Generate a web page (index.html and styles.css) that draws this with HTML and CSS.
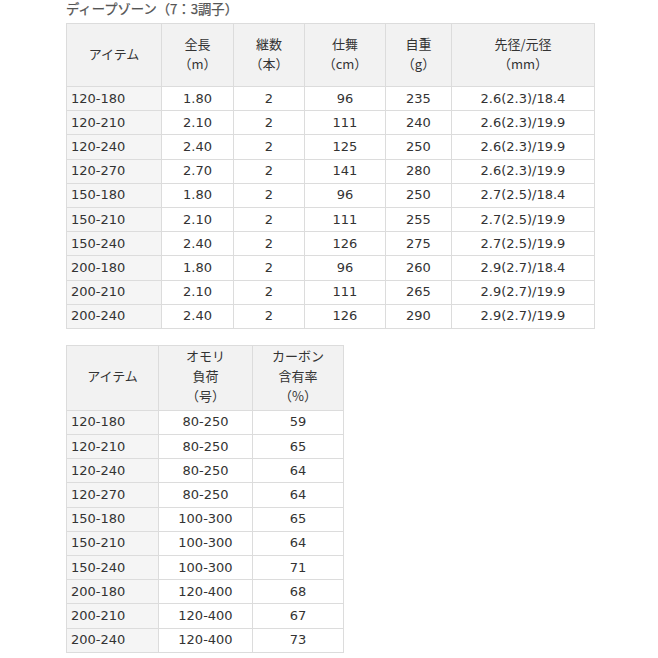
FILE: index.html
```html
<!DOCTYPE html>
<html lang="ja">
<head>
<meta charset="utf-8">
<link rel="stylesheet" href="styles.css">
</head>
<body>
<div class="page">
  <h2 class="title">ディープゾーン（7：3調子）</h2>
  <table class="spec spec1">
    <colgroup>
      <col style="width:95px"><col style="width:72px"><col style="width:71px"><col style="width:81px"><col style="width:66px"><col style="width:143px">
    </colgroup>
    <thead>
      <tr><th>アイテム</th><th>全長<br>（m）</th><th>継数<br>（本）</th><th>仕舞<br>（cm）</th><th>自重<br>（g）</th><th>先径/元径<br>（mm）</th></tr>
    </thead>
    <tbody>
      <tr><td>120-180</td><td>1.80</td><td>2</td><td>96</td><td>235</td><td>2.6(2.3)/18.4</td></tr>
      <tr><td>120-210</td><td>2.10</td><td>2</td><td>111</td><td>240</td><td>2.6(2.3)/19.9</td></tr>
      <tr><td>120-240</td><td>2.40</td><td>2</td><td>125</td><td>250</td><td>2.6(2.3)/19.9</td></tr>
      <tr><td>120-270</td><td>2.70</td><td>2</td><td>141</td><td>280</td><td>2.6(2.3)/19.9</td></tr>
      <tr><td>150-180</td><td>1.80</td><td>2</td><td>96</td><td>250</td><td>2.7(2.5)/18.4</td></tr>
      <tr><td>150-210</td><td>2.10</td><td>2</td><td>111</td><td>255</td><td>2.7(2.5)/19.9</td></tr>
      <tr><td>150-240</td><td>2.40</td><td>2</td><td>126</td><td>275</td><td>2.7(2.5)/19.9</td></tr>
      <tr><td>200-180</td><td>1.80</td><td>2</td><td>96</td><td>260</td><td>2.9(2.7)/18.4</td></tr>
      <tr><td>200-210</td><td>2.10</td><td>2</td><td>111</td><td>265</td><td>2.9(2.7)/19.9</td></tr>
      <tr><td>200-240</td><td>2.40</td><td>2</td><td>126</td><td>290</td><td>2.9(2.7)/19.9</td></tr>
    </tbody>
  </table>
  <table class="spec spec2">
    <colgroup>
      <col style="width:92px"><col style="width:94px"><col style="width:91px">
    </colgroup>
    <thead>
      <tr><th>アイテム</th><th>オモリ<br>負荷<br>（号）</th><th>カーボン<br>含有率<br>（%）</th></tr>
    </thead>
    <tbody>
      <tr><td>120-180</td><td>80-250</td><td>59</td></tr>
      <tr><td>120-210</td><td>80-250</td><td>65</td></tr>
      <tr><td>120-240</td><td>80-250</td><td>64</td></tr>
      <tr><td>120-270</td><td>80-250</td><td>64</td></tr>
      <tr><td>150-180</td><td>100-300</td><td>65</td></tr>
      <tr><td>150-210</td><td>100-300</td><td>64</td></tr>
      <tr><td>150-240</td><td>100-300</td><td>71</td></tr>
      <tr><td>200-180</td><td>120-400</td><td>68</td></tr>
      <tr><td>200-210</td><td>120-400</td><td>67</td></tr>
      <tr><td>200-240</td><td>120-400</td><td>73</td></tr>
    </tbody>
  </table>
</div>
</body>
</html>
```
FILE: styles.css
```css
html, body {
  margin: 0;
  padding: 0;
  background: #fff;
}
body {
  font-family: "DejaVu Sans", "Noto Sans CJK JP", sans-serif;
  color: #333;
  font-size: 13px;
}
.page {
  padding: 0 0 0 66px;
}
.title {
  margin: 0;
  height: 23px;
  font-size: 13.3px;
  line-height: 18px;
  font-weight: normal;
  color: #555;
  font-family: "Noto Sans CJK JP", sans-serif;
  -webkit-text-stroke: 0.25px #555;
}
.spec {
  border-collapse: collapse;
  table-layout: fixed;
  border: 1px solid #dcdcdc;
}
.spec1 {
  width: 529px;
  margin-bottom: 16px;
}
.spec2 {
  width: 278px;
}
.spec th {
  background: #f2f2f2;
  font-weight: normal;
  border: 1px solid #dcdcdc;
  height: 60px;
  padding: 0 0 2px;
  line-height: 20px;
  text-align: center;
  font-family: "Noto Sans CJK JP", sans-serif;
  font-size: 13px;
}
.spec2 th {
  height: 58px;
  padding: 0 0 4px;
}
.spec td {
  border: 1px solid #dcdcdc;
  height: 23.2px;
  padding: 0 4px;
  text-align: center;
  line-height: 16px;
  white-space: nowrap;
}
.spec td:first-child {
  background: #f5f5f5;
  text-align: left;
}
```
